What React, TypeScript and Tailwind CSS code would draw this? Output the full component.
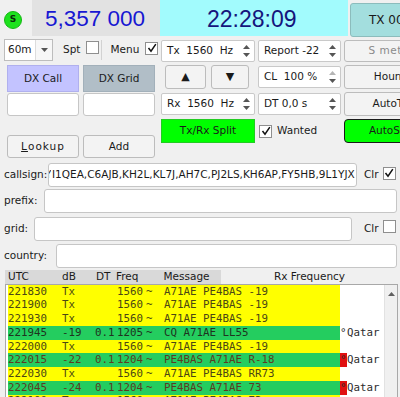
import React from "react";

type Row = {
  utc: string;
  db: string;
  dt: string;
  freq: string;
  msg: string;
  kind: "tx" | "cq" | "me";
  country?: boolean;
  flag?: boolean;
};

const rows: Row[] = [
  { utc: "221830", db: "Tx", dt: "", freq: "1560", msg: "A71AE PE4BAS -19", kind: "tx" },
  { utc: "221900", db: "Tx", dt: "", freq: "1560", msg: "A71AE PE4BAS -19", kind: "tx" },
  { utc: "221930", db: "Tx", dt: "", freq: "1560", msg: "A71AE PE4BAS -19", kind: "tx" },
  { utc: "221945", db: "-19", dt: "0.1", freq: "1205", msg: "CQ A71AE LL55", kind: "cq", country: true },
  { utc: "222000", db: "Tx", dt: "", freq: "1560", msg: "A71AE PE4BAS -19", kind: "tx" },
  { utc: "222015", db: "-22", dt: "0.1", freq: "1204", msg: "PE4BAS A71AE R-18", kind: "me", country: true, flag: true },
  { utc: "222030", db: "Tx", dt: "", freq: "1560", msg: "A71AE PE4BAS RR73", kind: "tx" },
  { utc: "222045", db: "-24", dt: "0.1", freq: "1204", msg: "PE4BAS A71AE 73", kind: "me", country: true, flag: true },
  { utc: "222100", db: "Tx", dt: "", freq: "1560", msg: "A71AE PE4BAS 73", kind: "tx" },
];

const rowStyle = {
  tx: "bg-[#ffff00] text-[#4b4714]",
  cq: "bg-[#24cd5f] text-[#1f3320]",
  me: "bg-[#24cd5f] text-[#5e3a22]",
};

const SpinArrows = ({ dim }: { dim?: boolean }) => (
  <div className="flex flex-col items-center justify-center gap-[4px] w-[11px]">
    <svg width="7" height="4" viewBox="0 0 7 4">
      <path d="M0 4 L3.5 0 L7 4Z" fill={dim ? "#b5b5b5" : "#555"} />
    </svg>
    <svg width="7" height="4" viewBox="0 0 7 4">
      <path d="M0 0 L3.5 4 L7 0Z" fill="#555" />
    </svg>
  </div>
);

const Spin = ({ text, dim }: { text: string; dim?: boolean }) => (
  <div className="h-full flex items-center bg-white border border-[#c9c9c9] rounded-[2px] pl-[5px] pr-[2px]">
    <span className="flex-1 whitespace-pre">{text}</span>
    <SpinArrows dim={dim} />
  </div>
);

const Check = ({ checked }: { checked?: boolean }) => (
  <span className="inline-flex shrink-0 w-[13px] h-[13px] bg-white border border-[#8f8f8f] items-center justify-center">
    {checked && (
      <svg width="10" height="10" viewBox="0 0 10 10">
        <path d="M1.5 5 L4 8.2 L8.8 1.2" stroke="#111" strokeWidth="1.5" fill="none" />
      </svg>
    )}
  </span>
);

const Btn = ({ children, className }: { children: React.ReactNode; className?: string }) => (
  <div
    className={
      "h-full flex items-center justify-center border border-[#bcbcbc] rounded-[3px] bg-[#f3f3f3] whitespace-nowrap " +
      (className ?? "")
    }
  >
    {children}
  </div>
);

const Field = ({ children, className }: { children?: React.ReactNode; className?: string }) => (
  <div className={"h-full shrink-0 bg-white border border-[#c6c6c6] rounded-[3px] " + (className ?? "")}>{children}</div>
);

export default function App() {
  return (
    <div className="w-[400px] h-[397px] overflow-hidden bg-[#f0f0f0] font-['DejaVu_Sans',sans-serif] text-[10.5px] text-[#1a1a1a]">
      {/* top strip */}
      <div className="flex h-[37px]">
        <div className="w-[32px] shrink-0 pt-[11px] pl-[4px]">
          <div className="w-[18px] h-[18px] rounded-full bg-[#1ee21e] border border-[#14b814] flex items-center justify-center text-[9px] font-bold text-[#0b2a0b]">
            S
          </div>
        </div>
        <div className="w-[128px] shrink-0 h-[36px] bg-[#e2e2e2] flex items-center pl-[13px] pt-[2px] font-['Liberation_Sans',sans-serif] text-[22.5px] text-[#1717d2]">
          5,357 000
        </div>
        <div className="w-[188px] shrink-0 h-[36px] bg-[#a2fbfd] flex items-center pl-[47px] pt-[2px] font-['Liberation_Sans',sans-serif] text-[23px] text-[#15157c]">
          22:28:09
        </div>
        <div className="ml-[2px] mt-[3px] h-[34px] w-[80px] shrink-0 bg-[#a3dede] border border-[#8cbcbc] rounded-[3px] pl-[18px] flex items-center text-[12px] whitespace-nowrap">
          TX 00:00
        </div>
      </div>

      {/* controls */}
      <div className="flex mt-[2px]">
        <div className="w-[161px] shrink-0 flex flex-col">
          <div className="h-[22px] flex items-center">
            <div className="ml-[4px] w-[49px] h-[22px] bg-white border border-[#bdbdbd] flex">
              <span className="flex-1 flex items-center pl-[3px]">60m</span>
              <span className="w-[17px] border-l border-[#dcdcdc] bg-[#f7f7f7] flex items-center justify-center">
                <svg width="7" height="4" viewBox="0 0 7 4">
                  <path d="M0 0 L3.5 4 L7 0Z" fill="#555" />
                </svg>
              </span>
            </div>
            <span className="ml-[10px]">Spt</span>
            <span className="ml-[6px]">
              <Check />
            </span>
            <span className="ml-[2px] w-px h-[20px] bg-[#d2d2d2]" />
            <span className="ml-[8px]">Menu</span>
            <span className="ml-[6px]">
              <Check checked />
            </span>
          </div>
          <div className="mt-[4px] h-[27px] flex gap-[4px] pl-[7px]">
            <div className="w-[72px] bg-[#c3c3ff] border border-[#b0b0ee] flex items-center justify-center">DX Call</div>
            <div className="w-[72px] bg-[#b1bec7] border border-[#a2b0ba] flex items-center justify-center">DX Grid</div>
          </div>
          <div className="mt-[1px] h-[23px] flex gap-[4px] pl-[7px]">
            <Field className="w-[72px]" />
            <Field className="w-[72px]" />
          </div>
          <div className="mt-[19px] h-[23px] flex gap-[4px] pl-[7px]">
            <div className="w-[72px]">
              <Btn className="tracking-[1px]">
                <span className="underline">L</span>ookup
              </Btn>
            </div>
            <div className="w-[72px]">
              <Btn>Add</Btn>
            </div>
          </div>
        </div>

        <div className="mt-[1px] grid grid-cols-[94px_83px_94px] grid-rows-[22px_24px_24px_24px] gap-x-[3px] gap-y-[3px] shrink-0">
          <Spin text="Tx  1560  Hz" />
          <Spin text="Report -22" />
          <Btn className="text-[#8a8a8a] tracking-[0.5px]">S meter</Btn>

          <div className="flex pl-[4px] gap-[5px]">
            <div className="w-[41px]">
              <Btn className="text-[11px]">▲</Btn>
            </div>
            <div className="w-[38px]">
              <Btn className="text-[11px]">▼</Btn>
            </div>
          </div>
          <div className="py-[1px]">
            <Spin text="CL  100 %" dim />
          </div>
          <Btn>Hound</Btn>

          <div className="py-[1px]">
            <Spin text="Rx  1560  Hz" />
          </div>
          <div className="py-[1px]">
            <Spin text="DT 0,0 s" />
          </div>
          <Btn className="bg-[#68d75a] border-[#5ab84e]">AutoTx</Btn>

          <div className="h-full bg-[#00ff00] border border-[#22cc22] flex items-center justify-center">Tx/Rx Split</div>
          <div className="flex items-center pl-[1px] gap-[5px]">
            <Check checked />
            <span>Wanted</span>
          </div>
          <div className="h-full bg-[#00ff00] border border-[#1a1a1a] rounded-[4px] flex items-center justify-center">
            AutoSeq
          </div>
        </div>
      </div>

      {/* callsign filter rows */}
      <div className="mt-[5px] h-[24px] flex items-center pl-[4px]">
        <span className="w-[44px] shrink-0">callsign:</span>
        <Field className="w-[309px] flex items-center overflow-hidden whitespace-nowrap">
          <span className="inline-block w-[2px] overflow-hidden">
            <span className="inline-block -ml-[4px]">Y</span>
          </span>
          <span className="ml-[1px]">I1QEA,C6AJB,KH2L,KL7J,AH7C,PJ2LS,KH6AP,FY5HB,9L1YJX</span>
        </Field>
        <span className="ml-[7px]">Clr</span>
        <span className="ml-[4px]">
          <Check checked />
        </span>
      </div>
      <div className="mt-[2px] h-[24px] flex items-center pl-[4px]">
        <span className="w-[40px] shrink-0">prefix:</span>
        <Field className="w-[353px]" />
      </div>
      <div className="mt-[4px] h-[24px] flex items-center pl-[4px]">
        <span className="w-[30px] shrink-0">grid:</span>
        <Field className="w-[318px]" />
        <span className="ml-[12px]">Clr</span>
        <span className="ml-[4px]">
          <Check />
        </span>
      </div>
      <div className="mt-[3px] h-[24px] flex items-center pl-[4px]">
        <span className="w-[52px] shrink-0">country:</span>
        <Field className="w-[341px]" />
      </div>

      {/* decode list */}
      <div className="mt-[2px] h-[14px] flex">
        <div className="ml-[5px] w-[216px] shrink-0 bg-[#d9d9d9] flex items-center pl-[3px]">
          <span className="w-[54px]">UTC</span>
          <span className="w-[34px]">dB</span>
          <span className="w-[20px]">DT</span>
          <span className="w-[47.5px]">Freq</span>
          <span>Message</span>
        </div>
        <div className="w-[177px] shrink-0 flex items-center justify-center">Rx Frequency</div>
      </div>
      <div className="ml-[5px] w-[393px] h-[120px] bg-white border border-[#a8a8a8] flex">
        <div className="flex-1 pl-[2px] font-['DejaVu_Sans_Mono',monospace] text-[10.8px] whitespace-pre">
          {rows.map((r) => (
            <div key={r.utc} className="flex h-[13.7px] items-center">
              <div className={"w-[332px] shrink-0 h-full flex items-center " + rowStyle[r.kind]}>
                <span className="w-[54px] shrink-0">{r.utc}</span>
                <span className="w-[33px] shrink-0">{r.db}</span>
                <span className="w-[22px] shrink-0">{r.dt}</span>
                <span className="w-[28px] shrink-0">{r.freq}</span>
                <span className="w-[19px] shrink-0 pl-[1px]">~</span>
                <span>{r.msg}</span>
              </div>
              {r.country && (
                <div className="h-full flex items-center text-[#2c2c2c]">
                  <span className={r.flag ? "h-full w-[7px] flex items-center bg-[#e01010]" : "h-full w-[7px] flex items-center"}>°</span>
                  <span>Qatar</span>
                </div>
              )}
            </div>
          ))}
        </div>
        <div className="w-[13px] shrink-0 bg-[#f0f0f0] border-l border-[#e2e2e2] flex justify-center pt-[7px]">
          <svg width="7" height="4" viewBox="0 0 7 4">
            <path d="M0 4 L3.5 0 L7 4Z" fill="#606060" />
          </svg>
        </div>
      </div>
    </div>
  );
}
